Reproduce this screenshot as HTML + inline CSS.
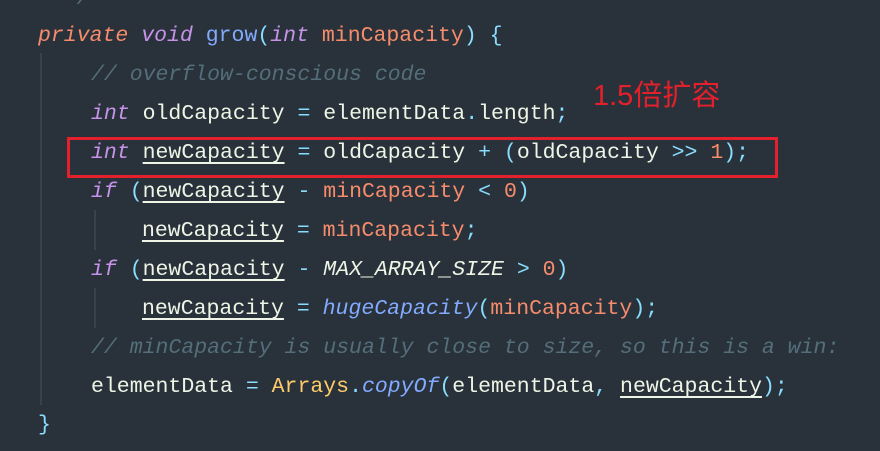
<!DOCTYPE html><html><head><style>
body{margin:0;width:880px;height:451px;background:#29323a;overflow:hidden;position:relative;font-family:"Liberation Mono","DejaVu Sans Mono",monospace;font-size:21.5px;color:#eef5e6}
.l{position:absolute;white-space:pre;line-height:39px;height:39px}
i{font-style:italic}
.k{color:#c792ea;font-style:italic}.p{color:#f78c6c}.f{color:#82aaff}.c{color:#89ddff}.m{color:#546e7a;font-style:italic}.y{color:#ffcb6b}
u{text-decoration:underline;text-underline-offset:4px}
.g{position:absolute;width:2px;background:#37424b}
</style></head><body>
<div class="l m" style="left:38px;top:-20px">  */</div>
<div class="l" style="left:38px;top:17px"><span class="p" style="font-style:italic">private</span> <span class="k">void</span> <span class="f">grow</span><span class="c">(</span><span class="k">int</span> <span class="p">minCapacity</span><span class="c">)</span> <span class="c">{</span></div>
<div class="g" style="left:40px;top:53px;height:352px"></div>
<div class="g" style="left:94px;top:210px;height:40px"></div>
<div class="g" style="left:94px;top:288px;height:40px"></div>
<div class="l m" style="left:91px;top:56px">// overflow-conscious code</div>
<div class="l" style="left:91px;top:95px"><span class="k">int</span> oldCapacity <span class="c">=</span> elementData<span class="c">.</span>length<span class="c">;</span></div>
<div class="l" style="left:91px;top:134px"><span class="k">int</span> <u>newCapacity</u> <span class="c">=</span> oldCapacity <span class="c">+</span> <span class="c">(</span>oldCapacity <span class="c">&gt;&gt;</span> <span class="p">1</span><span class="c">);</span></div>
<div class="l" style="left:91px;top:173px"><span class="k">if</span> <span class="c">(</span><u>newCapacity</u> <span class="c">-</span> <span class="p">minCapacity</span> <span class="c">&lt;</span> <span class="p">0</span><span class="c">)</span></div>
<div class="l" style="left:142px;top:212px"><u>newCapacity</u> <span class="c">=</span> <span class="p">minCapacity</span><span class="c">;</span></div>
<div class="l" style="left:91px;top:251px"><span class="k">if</span> <span class="c">(</span><u>newCapacity</u> <span class="c">-</span> <i>MAX_ARRAY_SIZE</i> <span class="c">&gt;</span> <span class="p">0</span><span class="c">)</span></div>
<div class="l" style="left:142px;top:290px"><u>newCapacity</u> <span class="c">=</span> <i class="f">hugeCapacity</i><span class="c">(</span><span class="p">minCapacity</span><span class="c">);</span></div>
<div class="l m" style="left:91px;top:329px">// minCapacity is usually close to size, so this is a win:</div>
<div class="l" style="left:91px;top:368px">elementData <span class="c">=</span> <span class="y">Arrays</span><span class="c">.</span><i class="f">copyOf</i><span class="c">(</span>elementData<span class="c">,</span> <u>newCapacity</u><span class="c">);</span></div>
<div class="l c" style="left:38px;top:406px">}</div>
<div style="position:absolute;left:67px;top:137px;width:705px;height:35px;border:3px solid #e3202b"></div>
<div style="position:absolute;left:593px;top:79px;font-family:'Liberation Sans','Noto Sans CJK SC',sans-serif;font-size:29px;line-height:34px;color:#e3202b">1.5倍扩容</div>
</body></html>
